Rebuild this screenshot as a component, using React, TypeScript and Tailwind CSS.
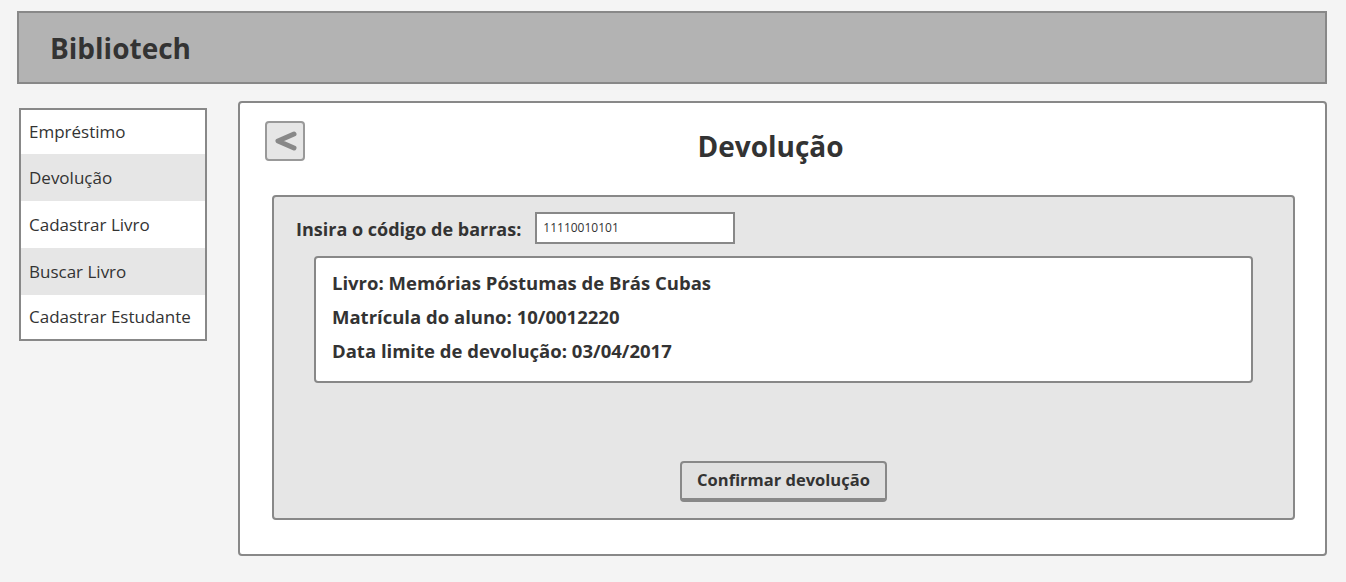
import React from 'react';

const menu = [
  { label: 'Empréstimo', shaded: false, h: 'h-[44px]' },
  { label: 'Devolução', shaded: true, h: 'h-[47px]' },
  { label: 'Cadastrar Livro', shaded: false, h: 'h-[47px]' },
  { label: 'Buscar Livro', shaded: true, h: 'h-[47px]' },
  { label: 'Cadastrar Estudante', shaded: false, h: 'h-[44px]' },
];

const App: React.FC = () => {
  return (
    <div className="min-h-[582px] w-full bg-[#f4f4f4] text-[#333] font-['Open_Sans','Lato',sans-serif] pt-[11px] px-[17px] pr-[19px]">
      {/* Header */}
      <div className="h-[73px] bg-[#b3b3b3] border-2 border-[#888] flex items-center pl-[31px]">
        <h1 className="text-[28px] font-bold leading-none">Bibliotech</h1>
      </div>

      <div className="flex items-start mt-[17px]">
        {/* Sidebar */}
        <div className="mt-[7px] ml-[2px] w-[188px] border-2 border-[#888] bg-white flex flex-col">
          {menu.map((m) => (
            <div
              key={m.label}
              className={`${m.h} flex items-center pl-[8px] text-[17px] ${m.shaded ? 'bg-[#e6e6e6]' : 'bg-white'}`}
            >
              {m.label}
            </div>
          ))}
        </div>

        {/* Main panel */}
        <div className="ml-[31px] flex-1 h-[455px] bg-white border-2 border-[#888] rounded-[4px] pt-[18px] pl-[32px] pr-[30px]">
          <div className="relative flex items-center justify-center h-[40px] pr-[26px]">
            <button className="absolute left-[-7px] top-0 w-[40px] h-[40px] bg-[#e6e6e6] border-2 border-[#999] rounded-[4px] flex items-center justify-center">
              <svg width="26" height="22" viewBox="0 0 26 22">
                <path d="M22 4 L6 11 L22 18" fill="none" stroke="#888" strokeWidth="5" strokeLinecap="round" strokeLinejoin="round" />
              </svg>
            </button>
            <h2 className="text-[28px] font-bold mt-[9px]">Devolução</h2>
          </div>

          <div className="mt-[34px] h-[325px] bg-[#e6e6e6] border-2 border-[#888] rounded-[4px] pt-[15px] pl-[22px] pr-[40px] flex flex-col">
            <div className="flex items-center">
              <span className="text-[18px] font-bold mt-[3px]">Insira o código de barras:</span>
              <div className="ml-[14px] w-[200px] h-[32px] bg-white border-2 border-[#888] flex items-center pl-[6px] text-[12px]">
                11110010101
              </div>
            </div>

            <div className="mt-[12px] ml-[18px] h-[127px] bg-white border-2 border-[#888] rounded-[4px] pl-[16px] pt-[13px] flex flex-col gap-[10px] text-[18.5px] font-bold">
              <div className="leading-[24px]">Livro: Memórias Póstumas de Brás Cubas</div>
              <div className="leading-[24px]">Matrícula do aluno: 10/0012220</div>
              <div className="leading-[24px]">Data limite de devolução: 03/04/2017</div>
            </div>

            <div className="flex justify-center mt-[78px] ml-[18px]">
              <button className="h-[41px] w-[207px] bg-[#e0e0e0] border-2 border-b-[4px] border-[#888] rounded-[4px] text-[16.5px] font-bold">
                Confirmar devolução
              </button>
            </div>
          </div>
        </div>
      </div>
    </div>
  );
};

export default App;
